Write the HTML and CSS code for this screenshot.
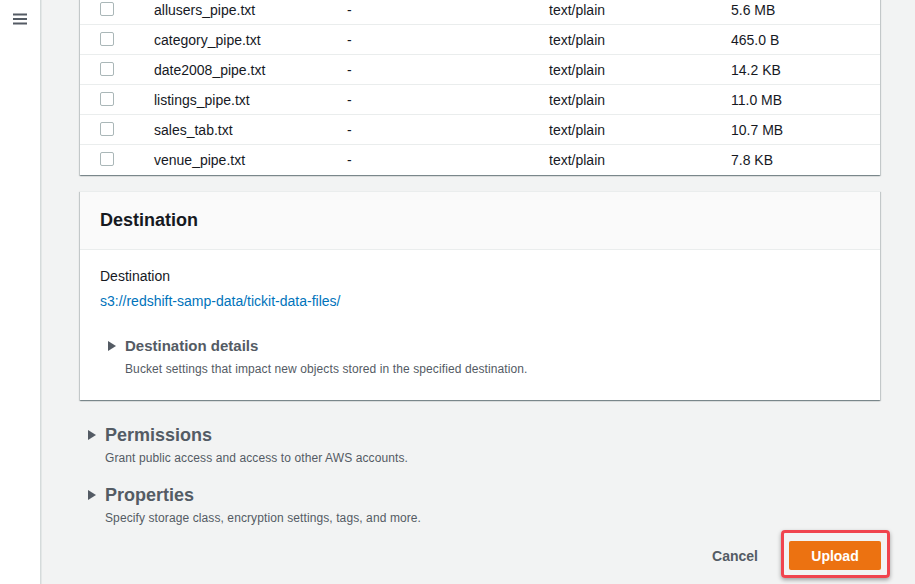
FILE: index.html
```html
<!DOCTYPE html>
<html>
<head>
<meta charset="utf-8">
<link rel="stylesheet" href="styles.css">
</head>
<body>
<div class="app">
  <aside class="sidebar">
    <button class="menu" aria-label="Open navigation">
      <svg width="14" height="12" viewBox="0 0 14 12"><rect x="0" y="0.5" width="14" height="2" fill="#545b64"/><rect x="0" y="5" width="14" height="2" fill="#545b64"/><rect x="0" y="9.5" width="14" height="2" fill="#545b64"/></svg>
    </button>
  </aside>
  <main class="main">
    <section class="card table-card">
      <div class="row"><span class="cell"><span class="cb"></span></span><span class="cell">allusers_pipe.txt</span><span class="cell">-</span><span class="cell">text/plain</span><span class="cell">5.6 MB</span></div>
      <div class="row"><span class="cell"><span class="cb"></span></span><span class="cell">category_pipe.txt</span><span class="cell">-</span><span class="cell">text/plain</span><span class="cell">465.0 B</span></div>
      <div class="row"><span class="cell"><span class="cb"></span></span><span class="cell">date2008_pipe.txt</span><span class="cell">-</span><span class="cell">text/plain</span><span class="cell">14.2 KB</span></div>
      <div class="row"><span class="cell"><span class="cb"></span></span><span class="cell">listings_pipe.txt</span><span class="cell">-</span><span class="cell">text/plain</span><span class="cell">11.0 MB</span></div>
      <div class="row"><span class="cell"><span class="cb"></span></span><span class="cell">sales_tab.txt</span><span class="cell">-</span><span class="cell">text/plain</span><span class="cell">10.7 MB</span></div>
      <div class="row last"><span class="cell"><span class="cb"></span></span><span class="cell">venue_pipe.txt</span><span class="cell">-</span><span class="cell">text/plain</span><span class="cell">7.8 KB</span></div>
    </section>

    <section class="card dest-card">
      <header class="card-header"><h2>Destination</h2></header>
      <div class="card-body">
        <div class="label">Destination</div>
        <a class="link" href="#">s3://redshift-samp-data/tickit-data-files/</a>
        <div class="expander small">
          <div class="exp-head"><span class="caret"></span><span class="exp-title">Destination details</span></div>
          <div class="exp-desc">Bucket settings that impact new objects stored in the specified destination.</div>
        </div>
      </div>
    </section>

    <div class="expander big first">
      <div class="exp-head"><span class="caret"></span><span class="exp-title">Permissions</span></div>
      <div class="exp-desc">Grant public access and access to other AWS accounts.</div>
    </div>
    <div class="expander big">
      <div class="exp-head"><span class="caret"></span><span class="exp-title">Properties</span></div>
      <div class="exp-desc">Specify storage class, encryption settings, tags, and more.</div>
    </div>

    <div class="actions">
      <button class="btn-link">Cancel</button>
      <div class="highlight"><button class="btn-primary">Upload</button></div>
    </div>
  </main>
</div>
</body>
</html>
```

FILE: styles.css
```css
* { box-sizing: border-box; }
html, body { margin: 0; padding: 0; height: 100%; overflow: hidden; }
body {
  font-family: "Liberation Sans", Arial, sans-serif;
  font-size: 14px;
  color: #16191f;
  background: #f2f3f3;
}
.app { display: flex; height: 584px; }
.sidebar {
  width: 41px;
  flex: none;
  background: #fff;
  border-right: 1px solid #d5dbdb;
  box-shadow: 1px 0 0 0 #e4e7e7;
}
.menu {
  margin: 13px 0 0 13px;
  padding: 0;
  border: 0;
  background: none;
  display: block;
  width: 14px;
  height: 12px;
}
.menu svg { display: block; }
.main {
  flex: 1;
  padding: 0 35px 0 39px;
  margin-top: -5px;
}
.card {
  background: #fff;
  box-shadow: 0 1px 1px 0 rgba(0,28,36,.3), 1px 1px 1px 0 rgba(0,28,36,.15), -1px 1px 1px 0 rgba(0,28,36,.15);
}
.table-card { width: 800px; }
.row {
  display: grid;
  grid-template-columns: 54px 193px 202px 182px 169px;
  height: 30px;
  align-items: center;
  border-bottom: 1px solid #eaeded;
}
.row.last { border-bottom: 0; }
.cell { padding-left: 20px; line-height: 18px; }
.cb {
  display: block;
  width: 14px;
  height: 14px;
  border: 1px solid #aab7b8;
  border-radius: 2px;
  margin-top: -2px;
}
.dest-card {
  width: 800px;
  margin-top: 16px;
  border-top: 1px solid #eaeded;
}
.card-header {
  background: #fafafa;
  height: 58px;
  border-bottom: 1px solid #eaeded;
  padding: 0 20px 2px;
  display: flex;
  align-items: center;
}
.card-header h2 {
  margin: 0;
  font-size: 18px;
  font-weight: 700;
  line-height: 22px;
  color: #16191f;
}
.card-body { padding: 15px 20px 23px; }
.label { line-height: 22px; }
.link {
  display: block;
  color: #0073bb;
  text-decoration: none;
  line-height: 22px;
  margin-top: 3px;
}
.expander .exp-head { display: flex; align-items: center; }
.caret {
  width: 0; height: 0;
  border-top: 5px solid transparent;
  border-bottom: 5px solid transparent;
  border-left: 8px solid #545b64;
}
.exp-title { font-weight: 700; color: #545b64; }
.exp-desc { color: #545b64; font-size: 12px; line-height: 16px; letter-spacing: 0.1px; }
.expander.small { margin-top: 23px; padding-left: 8px; }
.expander.small .exp-title { font-size: 15px; line-height: 22px; margin-left: 9px; }
.expander.small .exp-desc { padding-left: 17px; margin-top: 4px; }
.expander.big { padding-left: 8px; margin-top: 17px; }
.expander.big.first { margin-top: 23px; }
.expander.big .exp-title { font-size: 18px; line-height: 24px; margin-left: 9px; }
.expander.big .exp-desc { padding-left: 17px; margin-top: 3px; }
.actions {
  display: flex;
  justify-content: flex-end;
  align-items: flex-start;
  width: 810px;
  margin-top: 4px;
}
.btn-link {
  border: 0;
  background: none;
  font-family: inherit;
  font-size: 14px;
  font-weight: 700;
  color: #545b64;
  padding: 0;
  height: 29px;
  margin-top: 11px;
  margin-right: 23px;
}
.highlight {
  border: 3px solid #f0444e;
  border-radius: 4px;
  padding: 8px 6px 5px 5px;
  box-shadow: 0 2px 4px rgba(0,0,0,.35);
}
.btn-primary {
  display: block;
  width: 92px;
  height: 29px;
  border: 0;
  border-radius: 2px;
  background: #ec7211;
  color: #fff;
  font-family: inherit;
  font-size: 14px;
  font-weight: 700;
}
```
